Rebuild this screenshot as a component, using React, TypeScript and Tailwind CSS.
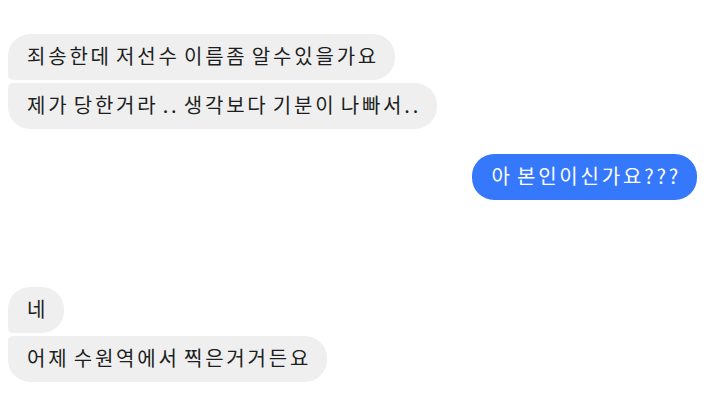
const font = { fontFamily: '"Noto Sans CJK KR", "Noto Sans", sans-serif' };

function Bubble({ text, className }: { text: string; className: string }) {
  return (
    <div
      className={`pl-[19px] pr-[16px] pt-[9px] pb-[12px] text-[20px] leading-[25px] tracking-[2.8px] [word-spacing:-3px] whitespace-nowrap ${className}`}
    >
      {text}
    </div>
  );
}

export default function App() {
  return (
    <div className="w-[714px] h-[400px] bg-white overflow-hidden pt-[34px] pl-2 pr-[17px]" style={font}>
      <div className="flex flex-col items-start gap-[3px]">
        <Bubble text="죄송한데 저선수 이름좀 알수있을가요" className="bg-[#efefef] text-[#1c1e21] rounded-[22px] rounded-bl-[5px]" />
        <Bubble text="제가 당한거라 .. 생각보다 기분이 나빠서.." className="bg-[#efefef] text-[#1c1e21] rounded-[22px] rounded-tl-[5px]" />
      </div>
      <div className="flex justify-end mt-[25px]">
        <Bubble text="아 본인이신가요???" className="bg-[#3578fc] text-white rounded-[22px]" />
      </div>
      <div className="flex flex-col items-start gap-[3px] mt-[87px]">
        <Bubble text="네" className="bg-[#efefef] text-[#1c1e21] rounded-[22px] rounded-bl-[5px]" />
        <Bubble text="어제 수원역에서 찍은거거든요" className="bg-[#efefef] text-[#1c1e21] rounded-[22px] rounded-tl-[5px]" />
      </div>
    </div>
  );
}
